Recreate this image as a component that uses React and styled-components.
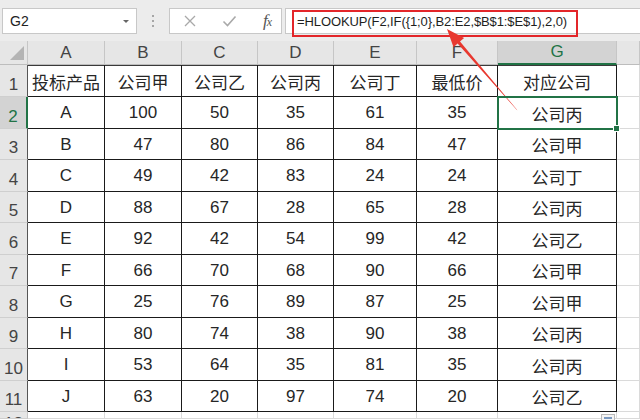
import React from "react";
import styled, { createGlobalStyle, css } from "styled-components";

const GREEN = "#217346";

const GlobalStyle = createGlobalStyle`
  html, body {
    margin: 0;
    padding: 0;
    background: #ffffff;
  }
  body {
    font-family: "Liberation Sans", "Noto Sans CJK SC", sans-serif;
  }
`;

const COLS = ["A", "B", "C", "D", "E", "F", "G"];

const DATA = [
  ["投标产品", "公司甲", "公司乙", "公司丙", "公司丁", "最低价", "对应公司"],
  ["A", 100, 50, 35, 61, 35, "公司丙"],
  ["B", 47, 80, 86, 84, 47, "公司甲"],
  ["C", 49, 42, 83, 24, 24, "公司丁"],
  ["D", 88, 67, 28, 65, 28, "公司丙"],
  ["E", 92, 42, 54, 99, 42, "公司乙"],
  ["F", 66, 70, 68, 90, 66, "公司甲"],
  ["G", 25, 76, 89, 87, 25, "公司甲"],
  ["H", 80, 74, 38, 90, 38, "公司丙"],
  ["I", 53, 64, 35, 81, 35, "公司丙"],
  ["J", 63, 20, 97, 74, 20, "公司乙"],
];

const Page = styled.div`
  position: relative;
  width: 640px;
  height: 420px;
  overflow: hidden;
  background: #fff;
`;

/* ---------- formula toolbar ---------- */

const Toolbar = styled.div`
  height: 42px;
  box-sizing: border-box;
  padding: 8px 0 0 2px;
  display: flex;
  align-items: flex-start;
  background: #ececec;
  border-bottom: 1px solid #dcdcdc;
`;

const Field = styled.div`
  height: 26px;
  box-sizing: border-box;
  background: #fff;
  border: 1px solid #c8c8c8;
  display: flex;
  align-items: center;
`;

const NameBox = styled(Field)`
  width: 135px;
  padding: 0 7px;
  justify-content: space-between;
  font-size: 14px;
  color: #222;
`;

const Caret = styled.span`
  width: 0;
  height: 0;
  border-left: 3px solid transparent;
  border-right: 3px solid transparent;
  border-top: 3px solid #666;
  margin-top: 1px;
`;

const Grip = styled.div`
  width: 32px;
  height: 26px;
  display: flex;
  flex-direction: column;
  align-items: center;
  justify-content: center;
  gap: 3px;

  span {
    width: 2px;
    height: 2px;
    background: #a6a6a6;
  }
`;

const FxBox = styled(Field)`
  width: 113px;
  padding: 0 10px 0 13px;
  justify-content: space-between;
  margin-right: 3px;
`;

const FxLabel = styled.span`
  font-family: "Liberation Serif", serif;
  font-style: italic;
  font-size: 17px;
  color: #555;
  letter-spacing: -1px;

  small {
    font-size: 12px;
  }
`;

const FormulaField = styled(Field)`
  flex: 1;
  border-right: none;
  padding-left: 11px;
  font-size: 13px;
  letter-spacing: -0.1px;
  color: #1e1e1e;
`;

/* ---------- sheet grid ---------- */

const Sheet = styled.div`
  display: grid;
  grid-template-columns: 28px 77px 77px 76px 76px 83px 81px 119px 1fr;
  grid-template-rows: 24px 32px repeat(10, 31.5px) 1fr;
  height: 378px;
  margin-top: -1px;
`;

const HeadCell = styled.div`
  box-sizing: border-box;
  background: ${(p) => (p.$sel ? "#d3d3d3" : "#e6e6e6")};
  color: ${(p) => (p.$sel ? GREEN : "#444")};
  font-size: 17px;
  display: flex;
  justify-content: center;
  align-items: flex-end;
  overflow: hidden;
`;

const ColHead = styled(HeadCell)`
  padding-bottom: 1px;
  border-right: 1px solid #c6c6c6;
  border-bottom: ${(p) => (p.$sel ? `2px solid ${GREEN}` : "1px solid #bdbdbd")};
`;

const Corner = styled(HeadCell)`
  border-right: 1px solid #c6c6c6;
  border-bottom: 1px solid #bdbdbd;
  align-items: center;
  justify-content: flex-end;
  padding-right: 2px;
`;

const RowHead = styled(HeadCell)`
  padding-bottom: 1px;
  border-bottom: 1px solid #cfcfcf;
  border-right: ${(p) =>
    p.$sel ? `2px solid ${GREEN}` : p.$edge ? "1px solid #555" : "1px solid #c6c6c6"};

  ${(p) =>
    p.$partial &&
    css`
      align-items: flex-start;
      padding-top: 3px;
      line-height: 17px;
    `}
`;

const Cell = styled.div`
  position: relative;
  box-sizing: border-box;
  font-size: 17px;
  color: #262626;
  display: flex;
  justify-content: center;
  align-items: center;
  padding-top: 2px;
  white-space: nowrap;
  border-right: 1px solid ${(p) => (p.$table ? "#1a1a1a" : "#dadada")};
  border-bottom: 1px solid ${(p) => (p.$table ? "#1a1a1a" : "#dadada")};

  ${(p) =>
    p.$top &&
    css`
      box-shadow: inset 0 1px 0 #3a3a3a;
    `}

  ${(p) =>
    p.$sel &&
    css`
      z-index: 2;
      outline: 2px solid ${GREEN};
      outline-offset: -1px;

      &::after {
        content: "";
        position: absolute;
        right: -4px;
        bottom: -4px;
        width: 5px;
        height: 5px;
        background: ${GREEN};
        border: 1px solid #fff;
      }
    `}
`;

/* ---------- annotations ---------- */

const RedFrame = styled.div`
  position: absolute;
  left: 292px;
  top: 10px;
  width: 286px;
  height: 27px;
  box-sizing: border-box;
  border: 2px solid #e3262a;
  pointer-events: none;
`;

const Overlay = styled.svg`
  position: absolute;
  left: 0;
  top: 0;
  pointer-events: none;
`;

const QuickIcon = styled.div`
  position: absolute;
  left: 601px;
  top: 414px;
  width: 14px;
  height: 12px;
  box-sizing: border-box;
  border: 1px solid #b9b9b9;
  background: #f4f4f4;

  &::after {
    content: "";
    position: absolute;
    left: 2px;
    top: 2px;
    width: 8px;
    height: 2px;
    background: #7c9ac0;
  }
`;

const CrossIcon = () => (
  <svg width="14" height="14" viewBox="0 0 14 14">
    <path d="M2 2 L12 12 M12 2 L2 12" stroke="#a9a9a9" strokeWidth="1.3" fill="none" />
  </svg>
);

const CheckIcon = () => (
  <svg width="15" height="14" viewBox="0 0 15 14">
    <path d="M1.5 7.5 L5.5 11.5 L13.5 2.5" stroke="#a9a9a9" strokeWidth="1.6" fill="none" />
  </svg>
);

const SelectAll = () => (
  <svg width="16" height="16" viewBox="0 0 16 16">
    <polygon points="15,1 15,15 1,15" fill="#b4b4b4" />
  </svg>
);

export default function App() {
  const sel = { r: 2, c: 6 };

  return (
    <Page>
      <GlobalStyle />
      <Toolbar>
        <NameBox>
          G2
          <Caret />
        </NameBox>
        <Grip>
          <span />
          <span />
          <span />
        </Grip>
        <FxBox>
          <CrossIcon />
          <CheckIcon />
          <FxLabel>
            f<small>x</small>
          </FxLabel>
        </FxBox>
        <FormulaField>=HLOOKUP(F2,IF({"{"}1;0{"}"},B2:E2,$B$1:$E$1),2,0)</FormulaField>
      </Toolbar>

      <Sheet>
        <Corner>
          <SelectAll />
        </Corner>
        {COLS.map((c, i) => (
          <ColHead key={c} $sel={i === sel.c}>
            {c}
          </ColHead>
        ))}
        <ColHead />

        {DATA.map((row, ri) => {
          const r = ri + 1;
          return (
            <React.Fragment key={r}>
              <RowHead $sel={r === sel.r} $edge>
                {r}
              </RowHead>
              {row.map((v, ci) => (
                <Cell
                  key={ci}
                  $table
                  $top={r === 1}
                  $sel={r === sel.r && ci === sel.c}
                >
                  {v}
                </Cell>
              ))}
              <Cell />
            </React.Fragment>
          );
        })}

        <RowHead $partial>12</RowHead>
        {Array.from({ length: 8 }).map((_, i) => (
          <Cell key={i} />
        ))}
      </Sheet>

      <RedFrame />
      <Overlay width="640" height="420" viewBox="0 0 640 420">
        <polygon
          points="447,29 453.5,47.2 457.6,43.6 516.6,109.7 517.4,110.3 460.0,41.5 464.1,38.0"
          fill="#e8382f"
        />
      </Overlay>
      <QuickIcon />
    </Page>
  );
}
